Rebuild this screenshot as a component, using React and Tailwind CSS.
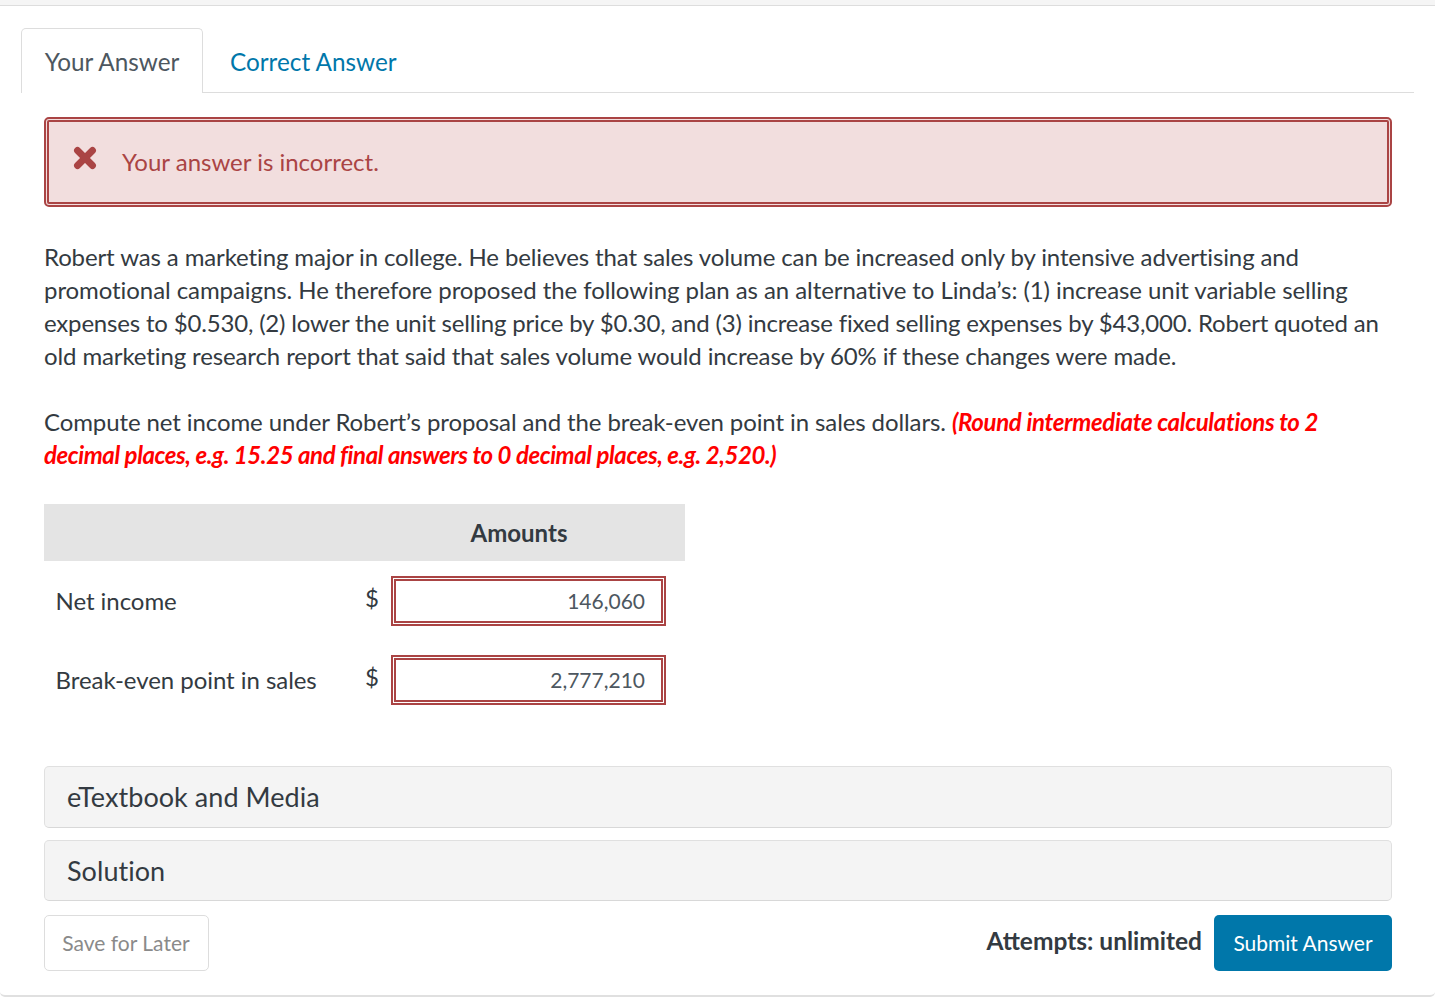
import { X } from 'lucide-react'

const rows = [
  { label: 'Net income', value: '146,060' },
  { label: 'Break-even point in sales', value: '2,777,210' },
]

const intro = [
  { text: 'Robert was a marketing major in college. He believes that sales volume can be increased only by intensive advertising and', track: 'tracking-[-0.12px]' },
  { text: 'promotional campaigns. He therefore proposed the following plan as an alternative to Linda’s: (1) increase unit variable selling', track: 'tracking-[-0.07px]' },
  { text: 'expenses to $0.530, (2) lower the unit selling price by $0.30, and (3) increase fixed selling expenses by $43,000. Robert quoted an', track: 'tracking-[-0.18px]' },
  { text: 'old marketing research report that said that sales volume would increase by 60% if these changes were made.', track: 'tracking-[-0.12px]' },
]

function Panel({ title, height, textClass }) {
  return (
    <div className={`${height} rounded-[5px] border border-[#e0e0e0] border-b-[#d8d8d8] bg-[#f4f4f4] pl-[22px] flex items-center text-[27px] tracking-[0.05px] text-[#333a41] ${textClass}`}>
      {title}
    </div>
  )
}

export default function App() {
  return (
    <div className="w-[1435px] h-[1002px] bg-white overflow-hidden font-['Lato','Carlito','Open_Sans',sans-serif] text-[#333a41]">
      <div className="h-[6px] bg-[#f5f5f5] border-b border-[#dddddd]" />

      <div className="mt-[22px] ml-[21px] mr-[21px] h-[65px] flex border-b border-[#dddddd]">
        <div className="w-[182px] h-[65px] bg-white border border-b-0 border-[#dddddd] rounded-t-[5px] flex items-center justify-center pt-[2px] text-[24.3px] text-[#4d5760]">
          Your Answer
        </div>
        <div className="pl-[27px] pt-[4px] flex items-center text-[24.3px] text-[#0077aa]">Correct Answer</div>
      </div>

      <div className="ml-[44px] mr-[43px]">
        <div className="mt-[24px] h-[90px] rounded-[5px] border-[5px] border-double border-[#aa4444] bg-[#f2dede] flex items-center pl-[21px] text-[#aa4444]">
          <X size={30} strokeWidth={5.5} className="-mt-[8px]" />
          <span className="ml-[22px] text-[24px]">Your answer is incorrect.</span>
        </div>

        <div className="mt-[33px] text-[24px] leading-[33px] whitespace-nowrap">
          {intro.map(line => (
            <p key={line.text} className={line.track}>{line.text}</p>
          ))}
        </div>

        <div className="mt-[33px] text-[24px] leading-[33px] whitespace-nowrap">
          <p className="tracking-[-0.1px]">
            Compute net income under Robert’s proposal and the break-even point in sales dollars.{' '}
            <em className="font-bold text-[#ff0000] tracking-[-0.32px]">(Round intermediate calculations to 2</em>
          </p>
          <p><em className="font-bold text-[#ff0000] tracking-[-0.41px]">decimal places, e.g. 15.25 and final answers to 0 decimal places, e.g. 2,520.)</em></p>
        </div>

        <div className="mt-[33px] w-[641px]">
          <div className="h-[57px] bg-[#e4e4e4] flex items-center justify-center pl-[309px] text-[24px] font-bold">
            Amounts
          </div>
          {rows.map(row => (
            <div key={row.label} className="h-[79px] flex items-center text-[24px] pl-[11.5px]">
              <span className="w-[309.5px] tracking-[-0.05px]">{row.label}</span>
              <span className="w-[26px] -mt-[6px]">$</span>
              <div className="w-[275px] h-[50px] border-[5px] border-double border-[#aa4444] flex items-center justify-end pr-[16px] text-[21px] text-[#4d5760]">
                {row.value}
              </div>
            </div>
          ))}
        </div>

        <div className="mt-[47px] flex flex-col gap-[12px]">
          <Panel title="eTextbook and Media" height="h-[62px]" textClass="" />
          <Panel title="Solution" height="h-[61px]" textClass="pt-[2px]" />
        </div>

        <div className="mt-[14px] flex items-center">
          <div className="w-[165px] h-[56px] rounded-[5px] border border-[#dddddd] flex items-center justify-center pr-[1px] text-[21px] text-[#8a8a8a]">
            Save for Later
          </div>
          <span className="ml-auto mr-[12px] -mt-[4px] text-[24.5px] font-bold">Attempts: unlimited</span>
          <div className="w-[178px] h-[56px] rounded-[5px] bg-[#0077aa] flex items-center justify-center text-[21px] text-white">
            Submit Answer
          </div>
        </div>
      </div>

      <div className="mt-[18px] h-[8px] rounded-b-[5px] border-b-2 border-[#e0e0e0]" />
    </div>
  )
}
